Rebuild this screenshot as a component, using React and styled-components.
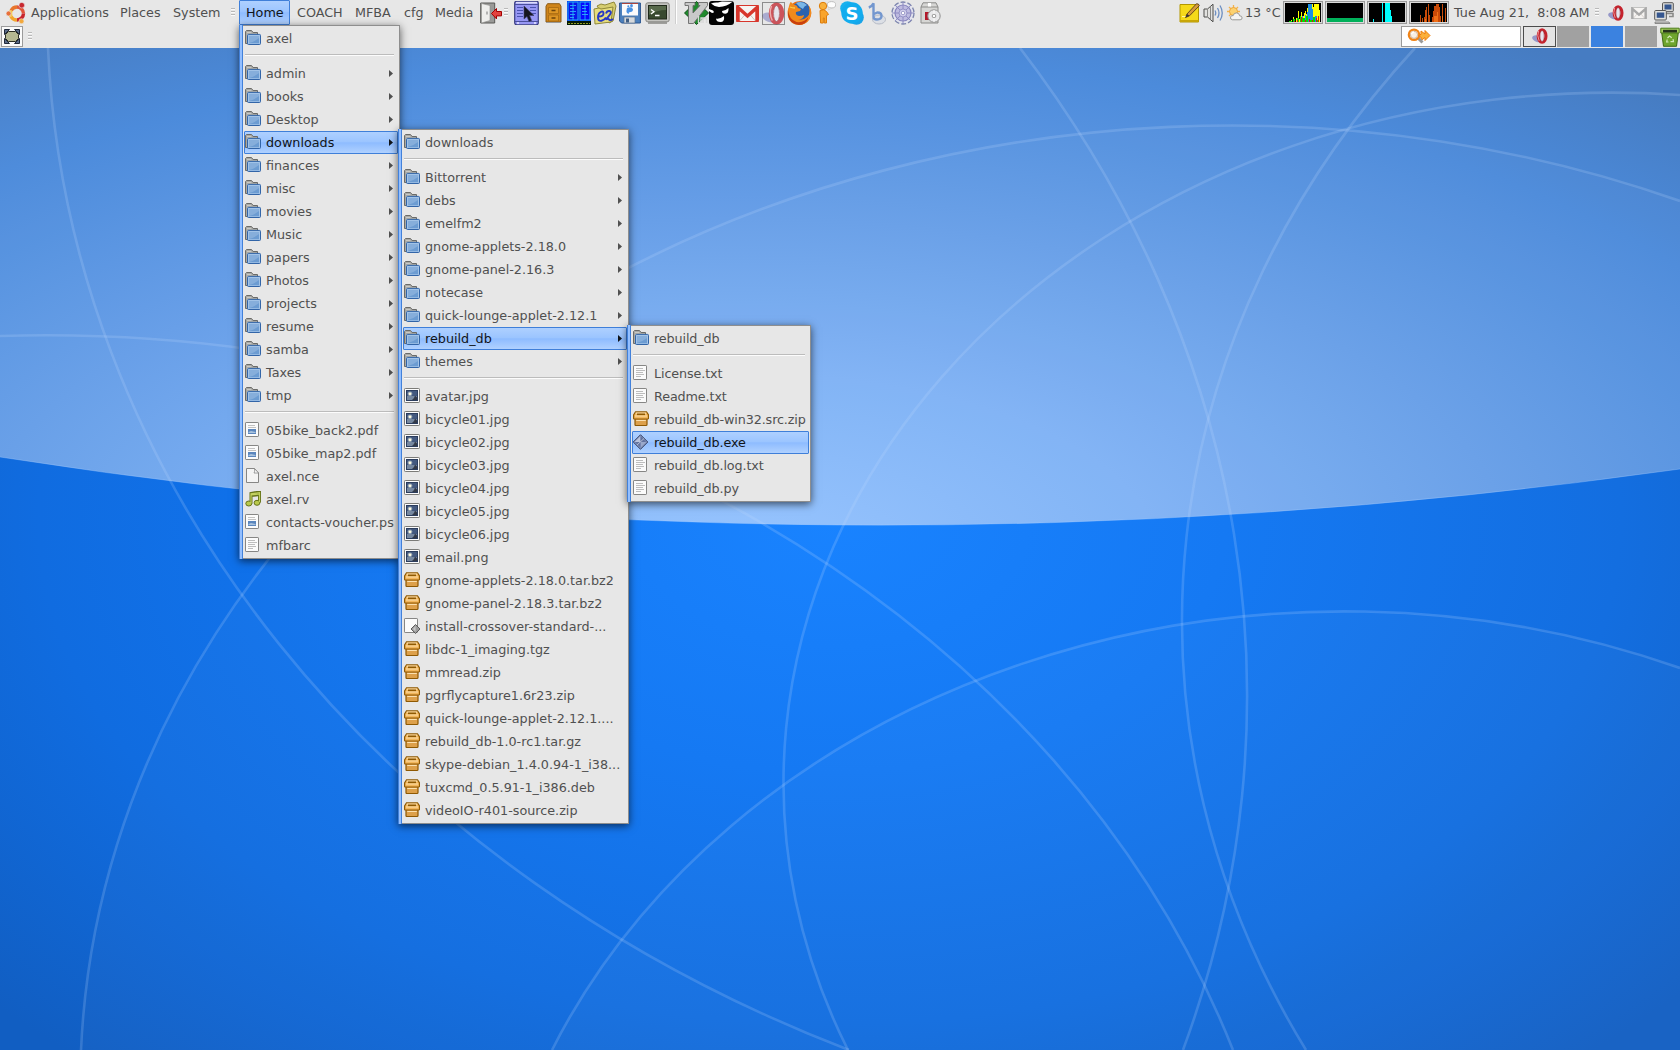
import React from "react";
import styled, { createGlobalStyle, css } from "styled-components";

const GlobalStyle = createGlobalStyle`
  * { box-sizing: border-box; }
  html, body { margin: 0; padding: 0; overflow: hidden; }
  body {
    font-family: "DejaVu Sans", sans-serif;
    font-size: 12.75px;
    color: #505050;
    cursor: default;
  }
  svg { display: block; flex: none; }
`;

/* ---------- layout ---------- */

const Desktop = styled.main`
  position: relative;
  width: 1680px;
  height: 1050px;
  overflow: hidden;
  background: #1474ee;
`;

const WallpaperSvg = styled.svg`
  position: absolute;
  inset: 0;
`;

const Panels = styled.header`
  position: relative;
  height: 48px;
  background: #e7e7e7;
`;

const Panel = styled.div`
  display: flex;
  align-items: center;
  height: 24px;
`;

const Slot = styled.div`
  display: flex;
  flex: none;
  align-items: center;
  height: 24px;
  padding-top: 2px;
  width: ${(p) => p.$w}px;
  margin-left: ${(p) => p.$gap || 0}px;
`;

const RightGroup = styled.div`
  display: flex;
  align-items: center;
  margin-left: auto;
`;

const highlight = css`
  color: #101418;
  border-color: #3f7fd9;
  background: linear-gradient(#aed0ff 0%, #9cc5ff 45%, #8ebcff 52%, #b0d1ff 100%);
`;

const MenuTitle = styled.div`
  flex: none;
  height: 25px;
  width: ${(p) => p.$w}px;
  margin-left: ${(p) => p.$gap || 0}px;
  padding-left: 6px;
  line-height: 24px;
  white-space: pre;
  border: 1px solid transparent;
  border-radius: 1px;
  align-self: flex-start;
  ${(p) => p.$active && highlight}
`;

const PanelText = styled.span`
  flex: none;
  width: ${(p) => p.$w}px;
  margin-left: ${(p) => p.$gap || 0}px;
  padding-top: 2px;
  line-height: 24px;
  white-space: pre;
`;

const Grip = styled.i`
  flex: none;
  width: 4px;
  height: 8px;
  margin-left: ${(p) => p.$gap || 0}px;
  background: repeating-linear-gradient(#b9b9b9 0 1px, #fafafa 1px 2px, transparent 2px 3px);
`;

const Divider = styled.i`
  flex: none;
  width: 2px;
  height: 24px;
  margin-left: ${(p) => p.$gap || 0}px;
  background: #cfcfcf;
  border-right: 1px solid #fff;
`;

const Monitor = styled.div`
  flex: none;
  width: 40px;
  height: 23px;
  padding: 1px;
  margin-left: 2px;
  background: #000;
  border: 1px solid #9a9a9a;
  box-shadow: inset 0 0 0 1px #dadada;
`;

const ShowDesktop = styled.div`
  display: flex;
  align-items: center;
  justify-content: center;
  width: 22px;
  height: 21px;
  margin-left: 1px;
  background: #fbfbfb;
  border: 1px solid #9b9b9b;
`;

const SearchEntry = styled.div`
  display: flex;
  align-items: center;
  width: 120px;
  height: 21px;
  padding-left: 5px;
  background: #fff;
  border: 1px solid #9b9b9b;
`;

const Workspace = styled.div`
  display: flex;
  align-items: center;
  justify-content: center;
  width: ${(p) => (p.$window ? 33 : 32)}px;
  height: 21px;
  margin-left: ${(p) => (p.$window ? 2 : p.$gap)}px;
  background: ${(p) => (p.$window ? "#e4e4e4" : p.$active ? "#3b82e0" : "#a1a1a1")};
  border: ${(p) => (p.$window ? "1px solid #4c4c4c" : "0")};
`;

/* ---------- menus ---------- */

const MenuBox = styled.nav`
  position: absolute;
  left: ${(p) => p.$x}px;
  top: ${(p) => p.$y}px;
  width: ${(p) => p.$w}px;
  display: flex;
  letter-spacing: ${(p) => p.$tracking || 0}px;
  background: #e7e7e7;
  border: 1px solid #8e8e8e;
  border-left: 0;
  box-shadow: 0 2px 8px rgba(0, 0, 0, 0.62);
`;

const MenuStripe = styled.i`
  flex: none;
  width: 4px;
  margin: -1px 0;
  background: #93bfff;
  border: solid #4281da;
  border-width: 0 1px;
`;

const MenuList = styled.div`
  flex: 1;
  min-width: 0;
  padding: 1px;
`;

const MenuRow = styled.div`
  display: flex;
  align-items: center;
  height: 23px;
  padding-right: 4px;
  border: 1px solid transparent;
  border-radius: 1px;
  white-space: nowrap;
  svg:first-child { margin-top: -2px; }
  ${(p) => p.$active && highlight}
`;

const MenuLabel = styled.span`
  flex: 1;
  min-width: 0;
  margin-left: 5px;
  line-height: 20px;
`;

const MenuRule = styled.hr`
  height: 2px;
  margin: 4px 4px 6px 1px;
  border: 0;
  background: linear-gradient(#bcbcbc 50%, #fcfcfc 50%);
`;

const Arrow = () => (
  <svg width="4" height="7" viewBox="0 0 4 7">
    <path d="M0 0 4 3.5 0 7Z" fill="currentColor" />
  </svg>
);

/* ---------- file icons ---------- */

const I = ({ s = 16, w, h, vb, children }) => (
  <svg width={w || s} height={h || s} viewBox={vb || `0 0 ${w || s} ${h || s}`}>{children}</svg>
);

const FolderIcon = () => (
  <I>
    <path d="M.5 13.5V1.5l1-1h5l1.6 2h4.4v11Z" fill="#a9a9a5" stroke="#6b6b68" />
    <path d="M2 2.5h4.400M2 4.500h10" stroke="#c9c9c5" fill="none" />
    <path d="M2.500 5.400q0-1 1-1h11q1 0 1 1v8.100q0 1-1 1h-11q-1 0-1-1Z" fill="#86aedb" stroke="#3265a8" />
    <path d="M3.500 5.500h11v8h-11z" fill="none" stroke="#a9c8ea" strokeWidth=".8" />
    <path d="M4 13q5-1 10-5v5.200H4Z" fill="#6c9cd2" />
  </I>
);

const Page = ({ children }) => (
  <>
    <rect x=".5" y=".5" width="13" height="14" rx=".6" fill="#fbfbfb" stroke="#868685" />
    {children}
  </>
);

const TextIcon = () => (
  <I>
    <Page>
      <path d="M3 3.500h7M3 5.500h9M3 7.500h7M3 9.500h8M3 11.500h5" stroke="#bdbdbd" fill="none" />
    </Page>
  </I>
);

const DocIcon = () => (
  <I>
    <Page>
      <path d="M3 3.500h7M3 5.500h8" stroke="#c2c2c2" fill="none" />
      <rect x="3" y="7" width="8" height="5" fill="#5b86bd" />
      <path d="M3.500 10 6 9l4.500 1v1h-7Z" fill="#a9c2dd" />
    </Page>
  </I>
);

const BlankIcon = () => (
  <I>
    <path d="M1.500.5h8l4 4.500v9.500h-12Z" fill="#f4f4f4" stroke="#868685" />
    <path d="M9.500.5q.8 3-.5 4.500h4.500Z" fill="#fff" stroke="#868685" strokeWidth=".8" />
  </I>
);

const MusicIcon = () => (
  <I>
    <path d="M6 12.500V2.500L14.500 1v10.500M6 4.600l8.500-1" fill="none" stroke="#65731a" strokeWidth="3" />
    <ellipse cx="3.800" cy="12.500" rx="3" ry="2.500" fill="#b9c94c" stroke="#65731a" />
    <ellipse cx="12" cy="11.800" rx="2.900" ry="2.500" fill="#b9c94c" stroke="#65731a" />
    <path d="M6 12V2.800L14.500 1.600V11M6 4l8.500-1" fill="none" stroke="#c3d160" strokeWidth="1.200" />
  </I>
);

const ImageIcon = () => (
  <I>
    <rect x=".5" y=".5" width="15" height="14" rx=".8" fill="#fcfcfc" stroke="#7b7b78" />
    <rect x="2.500" y="2.500" width="11" height="10" fill="#43597f" stroke="#2b3d5e" />
    <path d="M3 8h10v4H3Z" fill="#7688a0" />
    <circle cx="6" cy="5.800" r="2.400" fill="#8d9cae" />
    <circle cx="6" cy="5.800" r="1.400" fill="#fffce0" />
    <path d="M8 12q1-1 2-2l1-2.500 2 2V12Z" fill="#333a48" />
  </I>
);

const ArchiveIcon = () => (
  <I>
    <path d="M2 7.500h12v6q0 1-1 1H3q-1 0-1-1Z" fill="#dda04a" stroke="#8f5902" strokeWidth="1.200" />
    <path d="M2.500.9h11l2 3v3.300q0 .8-.8.8H1.400q-.8 0-.8-.8V3.900Z" fill="#f3b75c" stroke="#8f5902" strokeWidth="1.200" />
    <path d="M2.700 2.200h10.600M2 5h12M3.200 9.500h9.600" stroke="#fbe0ae" strokeWidth="1.200" />
    <path d="M4 3.300h8" stroke="#8f5902" strokeWidth="1.600" />
  </I>
);

const ScriptIcon = () => (
  <I>
    <Page />
    <path d="M11.500 6.500 16 11l-4.500 4.500L7 11Z" fill="#9c9c9c" stroke="#515151" strokeWidth=".9" />
    <path d="M11.500 8v5.500L9 11Z" fill="#c9c9c9" />
  </I>
);

const ExeIcon = () => (
  <I>
    <path d="M7.500.7 14.800 8l-7.300 7.300L.2 8Z" fill="#7d8fba" stroke="#3d4769" />
    <path d="M7.500 2v6H1.600Z" fill="#b8c3dd" />
    <path d="M7.500 8h5.800L7.500 13.800Z" fill="#9aa8ca" />
    <path d="M7.500 2 13 8H7.500ZM2 8h5.500v5.500Z" fill="#62729f" />
    <path d="M4 11 11 4.500" stroke="#c6cee2" strokeWidth=".8" />
  </I>
);

const icons = {
  dir: FolderIcon, text: TextIcon, doc: DocIcon, blank: BlankIcon, music: MusicIcon,
  image: ImageIcon, zip: ArchiveIcon, script: ScriptIcon, exe: ExeIcon,
};

/* ---------- panel icons ---------- */

const UbuntuIcon = () => (
  <I w={20} h={22}>
    <g fill="none" strokeWidth="3.400">
      <path d="M5.200 8.500A6.600 6.600 0 0 1 11 5" stroke="#e8762c" />
      <path d="M11 5A6.600 6.600 0 0 1 17.500 11.500" stroke="#e2553a" />
      <path d="M17.500 11.500A6.600 6.600 0 0 1 11 18" stroke="#c9252d" />
      <path d="M11 18A6.600 6.600 0 0 1 5 14.500" stroke="#f2a62e" />
      <path d="M5 14.500A6.600 6.600 0 0 1 5.200 8.500" stroke="#f6c544" />
    </g>
    <circle cx="2.600" cy="11.500" r="2.500" fill="#e8703a" stroke="#e7e7e7" strokeWidth=".6" />
    <circle cx="15.800" cy="3.200" r="2.800" fill="#c7272f" stroke="#e7e7e7" strokeWidth=".6" />
    <circle cx="15.500" cy="19.200" r="2.500" fill="#f3a83b" stroke="#e7e7e7" strokeWidth=".6" />
  </I>
);

const ExitIcon = () => (
  <I w={22} h={22}>
    <path d="M.7 1h14v20H.7Z" fill="#9a9a98" stroke="#595957" />
    <path d="M1.500 1.500 10 3.500v15L1.500 21Z" fill="#eeeeec" stroke="#8b8b89" strokeWidth=".6" />
    <path d="M7 9.500v3" stroke="#777" />
    <path d="M11.500 11.500 16.500 6.500v3h5v4.400h-5v3Z" fill="#e3433f" stroke="#a40000" />
  </I>
);

const BlueWindowIcon = () => (
  <I w={25} h={24} vb="0 0 25 24">
    <rect x=".7" y=".2" width="23.600" height="23.600" rx="2" fill="#9696f4" stroke="#383c80" strokeWidth="1.200" />
    <path d="M1 3.500h23M1 20.500h23" stroke="#4a4f9c" />
    <rect x="2" y="1" width="21" height="1.500" fill="#dcdcfa" />
    <path d="M3 6.500h6M3 9.500h6M3 12.500h6M3 15.500h6M16 6.500h6M16 9.500h6M16 12.500h6" stroke="#4a53b0" />
    <path d="M10 5v13l3-2.500 2 5 2.600-1-2-5h4.400Z" fill="#15151f" stroke="#3c3c66" strokeWidth=".6" />
    <circle cx="4" cy="22" r="1" fill="#e8e8ff" /><circle cx="21" cy="22" r="1" fill="#e8e8ff" />
  </I>
);

const CabinetIcon = () => (
  <I w={17} h={20}>
    <path d="M2.500.7h12l1.500 2.500V19H1V3.200Z" fill="#cf8419" stroke="#8d5a12" />
    <path d="M3.500 4.500h10v6h-10zM3.500 12h10v6h-10z" fill="#dd9524" stroke="#a76a12" strokeWidth=".8" />
    <path d="M6.500 7.500h4M6.500 15h4" stroke="#6d430a" strokeWidth="1.400" />
    <path d="M1 19.500h15" stroke="#999" />
  </I>
);

const ScreenIcon = () => (
  <I w={24} h={24}>
    <rect width="24" height="24" fill="#0c1cf0" />
    <rect x="1" y="1" width="10" height="18" fill="#0a14e8" stroke="#1eb4f0" />
    <rect x="13" y="1" width="10" height="18" fill="#0808ff" stroke="#1eb4f0" />
    <path d="M3 4.500h6M3 7.500h4M3 10.500h6M3 13.500h5M3 16.500h4M15 4.500h6M15 7.500h4M15 10.500h5M15 13.500h6" stroke="#2b9cf8" />
    <path d="M6 1v18M18 1v18" stroke="#20c0ff" strokeWidth=".8" />
    <rect y="20" width="24" height="4" fill="#041804" />
    <path d="M1 22.500h22" stroke="#8f9b22" strokeDasharray="2 1" />
  </I>
);

const E2Icon = () => (
  <I w={25} h={24}>
    <path d="M4 5 8 3l4 1 9-3 2 4-3 15-4 2Z" fill="#d6cd70" stroke="#8f8838" />
    <path d="M1 8l5-1 2 1 12-2-2 15-16 2Z" fill="#e6dd7c" stroke="#8f8838" />
    <path d="M5.500 15.500q5 0 5-3t-2.800-1.500T5 16.500t3.500 3.200q3-.5 4.500-3.200M13 12.500q1-3 3.500-2.500t.5 3.500-4.500 5q2-1.500 3.500 0t4-.5" fill="none" stroke="#2637c4" strokeWidth="1.900" />
  </I>
);

const FloppyIcon = () => (
  <I w={22} h={22}>
    <path d="M.6 1h20.800v20H2.500L.6 19Z" fill="#4c80bd" stroke="#28528d" />
    <rect x="3" y="1" width="16" height="12.500" fill="#fbfbfb" />
    <path d="M3 1.500h16" stroke="#a9443e" />
    <path d="M8 6q4-2 6 1 0 3-2.500 3t-1.500 2q-3-1-2.500-3.500Z" fill="#4a91e2" />
    <ellipse cx="12.500" cy="3.700" rx="1.400" ry="1.700" fill="#4a91e2" /><circle cx="9.300" cy="4.300" r="1" fill="#4a91e2" />
    <rect x="5" y="15" width="11" height="6" fill="#d6d9dc" stroke="#59738f" strokeWidth=".7" />
    <rect x="7" y="16.500" width="3" height="4" fill="#3f5f85" />
  </I>
);

const TerminalIcon = () => (
  <I w={25} h={22}>
    <rect x=".8" y=".8" width="23.400" height="19" rx="2" fill="#c4c4c0" stroke="#858581" />
    <rect x="3.500" y="3.500" width="18" height="13.500" fill="#38492f" stroke="#20291a" />
    <path d="M4 4h17v4Q12 8 4 13Z" fill="#57694b" />
    <path d="M6 7.500l3 2.300-3 2.300M10 13.500h4.500" fill="none" stroke="#fff" strokeWidth="1.300" />
    <path d="M3 21h19" stroke="#8d8d8a" strokeWidth="1.600" />
  </I>
);

const VimIcon = () => (
  <I w={25} h={24}>
    <path d="M12.500.5 24.500 12 12.500 23.500.5 12Z" fill="#1f8a2c" stroke="#0d4d16" />
    <path d="M1 1.500h10v3H9v7.500L16 4.500h-1.500v-3h9v3L9.500 22.500h-5V4.500H1Z" fill="#c9c9c9" stroke="#6a6a6a" strokeWidth=".9" />
    <path d="M14.500 15v7M17 22v-5l2 0v5M19 17h3.500v5" fill="none" stroke="#d8d8d8" strokeWidth="1.400" />
  </I>
);

const PirateIcon = () => (
  <I w={25} h={24}>
    <rect width="25" height="24" rx="3" fill="#040404" />
    <path d="M2 2.500Q6 1 9 1.500L13 .5 23.500 .8Q18 5.500 10 6 5 5.500 2 2.500Z" fill="#fff" />
    <path d="M13 10q4-.5 6.500-3 .5 5.500-3.200 5.800Q13 12.800 13 10Z" fill="#fff" />
    <path d="M7 17.500q3.500 1 8-2.500.8 6-3.500 6t-4.500-3.500Z" fill="#fff" />
    <path d="M0 8l4 1.500Q6 12 3 12L0 10Z" fill="#fff" />
  </I>
);

const MailIcon = ({ w, h, color }) => (
  <I w={w} h={h} vb="0 0 23 17">
    <rect x=".5" y=".5" width="22" height="16" rx="1" fill="#f6f4f2" stroke={color} />
    <path d="M3.500 16 9.500 9M19.500 16 13.500 9" stroke="#c9c4c0" />
    <path d="M2 17V2.500L11.500 11 21 2.500V17" fill="none" stroke={color} strokeWidth="3.400" />
  </I>
);

const OperaIcon = ({ w = 23, h = 23, dotted, fade }) => (
  <I w={w} h={h} vb="0 0 23 23">
    <g opacity={fade ? 0.75 : 1}>
      <ellipse cx="7.500" cy="15.500" rx="7.500" ry="4.500" transform="rotate(20 7.500 15.500)" fill="#9698c8" />
      <ellipse cx="14.500" cy="11.500" rx="5.600" ry="8.800" fill="#f2eeee" stroke="#c4222c" strokeWidth="4.400" />
      <ellipse cx="14.500" cy="11.500" rx="3" ry="8" fill="#e6e4ee" stroke="#8e1822" strokeWidth=".7" />
      <path d="M9.500 4q-2.800 7 .8 14.500" fill="none" stroke="#f0989b" strokeWidth="1.400" />
    </g>
    {dotted && <rect x=".5" y=".5" width="22" height="22" fill="none" stroke="#333" strokeDasharray="1 1" />}
  </I>
);

const FirefoxIcon = () => (
  <I w={25} h={24}>
    <circle cx="12.500" cy="12" r="11.700" fill="#e66c12" />
    <circle cx="14" cy="9.500" r="9" fill="#2b62ae" />
    <path d="M9 2q6-3 11 2-3 1-4 4-4-2-7-6Z" fill="#7ab6e6" />
    <path d="M2 5q1-4 2-4 1 2 4 3 2 0 3 3l3 1-1 2-4 1q-1 3 3 4 3 0 5-1 0 4-6 5 7 1 11-5 1-4 0-9 3 4 2 9-2 9-11 10Q3 24 .8 15 .2 9 2 5Z" fill="#f28a1c" />
    <path d="M1.500 9q0 9 8 12 8 1 12-5-2 8-9.500 8Q2 23 1 14Z" fill="#c9400e" />
    <path d="M3 6q2 1 5 1" stroke="#fbd04a" strokeWidth="1.300" fill="none" />
  </I>
);

const ChatIcon = () => (
  <I w={18} h={24}>
    <circle cx="5" cy="5" r="3.700" fill="#f9b13b" stroke="#dd7d0b" />
    <path d="M2 9.500q4-2 6.500 1l2 3-2 1v7.500H6.300v-5H5.300v5H2.600Z" fill="#f9a42b" stroke="#dd7d0b" />
    <ellipse cx="13.500" cy="3.800" rx="4.200" ry="3.200" fill="#fdfdfd" stroke="#bdbdbd" />
    <path d="M11.500 6.500 10.500 9l3-2Z" fill="#fdfdfd" stroke="#bdbdbd" strokeWidth=".5" />
  </I>
);

const Letter = styled.text`
  font: bold ${(p) => p.$s}px "DejaVu Sans", sans-serif;
  text-anchor: middle;
`;

const SkypeIcon = () => (
  <I w={24} h={24}>
    <circle cx="7.500" cy="7.500" r="7.300" fill="#18b1ee" /><circle cx="16.500" cy="16.500" r="7.300" fill="#18a4e8" />
    <circle cx="12" cy="12" r="10.700" fill="#12acee" />
    <Letter x="12" y="18.500" $s={18} fill="#fff">S</Letter>
  </I>
);

const BIcon = () => (
  <I w={18} h={23}>
    <ellipse cx="11" cy="17.500" rx="6.500" ry="4.500" fill="#dcdfe5" stroke="#b5bac5" />
    <path d="M.8 5.500Q4 4.500 5.500 1.200V15q0 2.500 3.500 2.500 4.500 0 4.500-3.500T9.500 10.500L6 12" fill="none" stroke="#7397cf" strokeWidth="2.400" />
  </I>
);

const WheelIcon = () => (
  <I w={24} h={24}>
    <circle cx="12" cy="12" r="11" fill="#e3e4ee" stroke="#7d86ad" strokeWidth="1.300" strokeDasharray="5 2" />
    <circle cx="12" cy="12" r="8" fill="#bebbe0" stroke="#8886be" strokeWidth="1.200" />
    <path d="M12 1v7M12 16v7M1 12h7M16 12h7M4.200 4.200l5 5M14.800 14.800l5 5M19.800 4.200l-5 5M9.200 14.800l-5 5" stroke="#8a88c0" strokeWidth=".9" />
    <circle cx="12" cy="12" r="4" fill="#cfcdea" stroke="#8a88c0" strokeWidth=".8" />
    <circle cx="12" cy="12" r="1.700" fill="#fff" stroke="#7775b0" strokeWidth=".6" />
  </I>
);

const PackageIcon = () => (
  <I w={21} h={22}>
    <path d="M1 5 3 .8h13L18 5v16H1Z" fill="#d6d6d4" stroke="#8b8b89" />
    <path d="M1 5h17" stroke="#8b8b89" /><path d="M8 1h3v3.500H8z" fill="#fff" />
    <rect x="5" y="10" width="7" height="8" fill="#b3182a" />
    <circle cx="14" cy="14" r="6.200" fill="#e8e8ea" stroke="#929292" />
    <circle cx="14" cy="14" r="1.800" fill="#fff" stroke="#999" />
    <path d="M14 8v4M14 16v4" stroke="#fff" />
  </I>
);

const NoteIcon = () => (
  <I w={21} h={20}>
    <path d="M1 1.500h18.500V19H1Z" fill="#f5d91a" stroke="#b39700" />
    <path d="M1 17h18.500v2H1Z" fill="#c8a608" />
    <path d="M6.500 14.500 8 11 17.500.7q2.500 0 2.800 2L10.500 12.800Z" fill="#d79a3c" stroke="#553c17" strokeWidth=".9" />
    <path d="M6.500 14.500 8 11l2.500 1.800Z" fill="#333" />
    <path d="M3 13.500h3.500" stroke="#fff7a8" />
  </I>
);

const SpeakerIcon = () => (
  <I w={21} h={20}>
    <path d="M1 6h3.500L10 1.200V18.800L4.500 14H1Z" fill="#e2e2e0" stroke="#4c4c4a" />
    <path d="M4.500 6v8M7.500 3.500v13" stroke="#8b8b88" />
    <path d="M12 7.500q1.500 2.500 0 5M14.500 5q3 5 0 10M17 2.500q4.500 7.500 0 15" fill="none" stroke="#6d8fc2" strokeWidth="1.300" />
  </I>
);

const WeatherIcon = () => (
  <I>
    <path d="M6.500 0v13M0 6.500h13M2 2l9 9M11 2l-9 9" stroke="#f3b24c" strokeWidth="1.300" />
    <circle cx="6.500" cy="6.500" r="4" fill="#fcd271" stroke="#eda53a" />
    <path d="M5.500 14.800q-2.500-.3-2-2.700.6-1.900 2.700-1.500.6-2.900 3.500-2.700 2.700.2 2.900 2.900 2.500 0 2.500 2.100 0 1.900-2 1.900Z" fill="#f5f5f5" stroke="#9a9a98" />
  </I>
);

const NetworkIcon = () => (
  <I w={20} h={22}>
    <rect x="8.500" y=".7" width="10.800" height="9" rx="1" fill="#d8d8d5" stroke="#555" />
    <rect x="10.500" y="2.500" width="7" height="5" fill="#35568f" />
    <path d="M9 11.500h10v3h-4" fill="none" stroke="#8a8a88" strokeWidth="1.600" />
    <rect x=".7" y="8.500" width="11.600" height="9.500" rx="1" fill="#e2e2df" stroke="#555" />
    <rect x="2.700" y="10.500" width="7.600" height="5.300" fill="#35568f" />
    <path d="M1 20h14l1 1.500H1Z" fill="#ccc" stroke="#777" strokeWidth=".8" />
  </I>
);

const FullscreenIcon = () => (
  <I w={16} h={15}>
    <path d="M.5.500h5l-5 5ZM15.500.5h-5l5 5ZM.5 14.500h5l-5-5ZM15.500 14.500h-5l5-5Z" fill="#5b6b86" stroke="#20293a" />
    <path d="M4.500 2.500h7l3 3v4l-3 3h-7l-3-3v-4Z" fill="#b5b892" stroke="#2c2e22" />
  </I>
);

const SearchIcon = () => (
  <I w={24} h={17}>
    <path d="M12 6.500h2V3l4 3V2.500l5 5-5 5V9.500l-4 3V9h-2Z" fill="#fbb03b" stroke="#ee7d0c" />
    <path d="M11 10l4.500 4.500" stroke="#999" strokeWidth="3" />
    <circle cx="7" cy="6.800" r="5.200" fill="#f7eee4" stroke="#f08316" strokeWidth="2.200" />
    <circle cx="7" cy="6.800" r="3.600" fill="none" stroke="#c9a684" strokeWidth=".8" />
    <path d="M4.500 6q.5-2 2.500-2" fill="none" stroke="#fff" strokeWidth="1.300" />
  </I>
);

const TrashIcon = () => (
  <I w={20} h={20}>
    <path d="M1.500 4h17l-2 15.300H3.500Z" fill="#6fa52e" stroke="#3f6a14" />
    <path d="M.8 1.200h18.400V6H.8Z" fill="#a5d05d" stroke="#4b7a19" />
    <path d="M3 2.800h14v2.700H3Z" fill="#26331b" />
    <path d="m7.500 11 2-2 2.200 1.700M13 12.200l.5 2.500h-3M8.500 15H6.700l.5-2.500" fill="none" stroke="#d4eab8" strokeWidth="1.200" />
  </I>
);

/* ---------- system monitors ---------- */

const Bars = ({ data, color }) =>
  data.map(([x, h, w = 1, base = 0], i) => (
    <rect key={i} x={x} y={19 - h - base} width={w} height={h} fill={color} />
  ));

const Graph = ({ children }) => (
  <Monitor>
    <svg width="36" height="19" viewBox="0 0 36 19" shapeRendering="crispEdges">
      <rect width="36" height="19" fill="#000" />
      {children}
    </svg>
  </Monitor>
);

const CpuGraph = () => (
  <Graph>
    <Bars color="#ffff00" data={[[6, 2], [8, 5], [11, 4], [13, 11], [14, 3], [15, 5], [16, 10], [18, 6], [19, 9], [20, 11], [21, 8], [22, 14], [23, 17], [24, 18], [27, 18], [28, 15], [29, 18, 5], [34, 12]]} />
    <Bars color="#1c8fe0" data={[[17, 6], [20, 7], [22, 10], [23, 18, 4], [27, 13], [30, 6, 2], [33, 3]]} />
    <Bars color="#00e000" data={[[4, 1, 3], [8, 3, 2], [12, 4, 2], [15, 6], [17, 4, 3], [21, 6, 2], [24, 2, 3], [28, 5, 2], [32, 2]]} />
    <Bars color="#e01010" data={[[9, 1], [12, 2], [16, 5], [20, 2], [24, 3], [27, 2], [31, 4], [33, 6]]} />
  </Graph>
);

const MemGraph = () => (
  <Graph><rect y="15" width="36" height="4" fill="#00b05a" /></Graph>
);

const NetGraph = () => (
  <Graph>
    <Bars color="#00ffff" data={[[4, 3], [13, 19], [16, 19, 5], [21, 12], [22, 6]]} />
  </Graph>
);

const LoadGraph = () => (
  <Graph>
    <Bars color="#c94a08" data={[[9, 7], [11, 4], [13, 5], [14, 12], [15, 15], [17, 18], [18, 7], [21, 5], [22, 11], [23, 16, 2], [25, 18, 3], [28, 15], [29, 6], [31, 18], [34, 14]]} />
    <Bars color="#f07018" data={[[14, 3], [23, 6, 3], [26, 10], [31, 6]]} />
  </Graph>
);

/* ---------- wallpaper ---------- */

const STRETCH = 1.2;

/* Elliptical arc (width:height = STRETCH) that runs through three points. */
const arc = (a, m, b) => {
  const [x1, y1, x2, y2, x3, y3] = [a[0], a[1] * STRETCH, m[0], m[1] * STRETCH, b[0], b[1] * STRETCH];
  const cross = (x2 - x1) * (y3 - y2) - (y2 - y1) * (x3 - x2);
  const r =
    (Math.hypot(x2 - x1, y2 - y1) * Math.hypot(x3 - x2, y3 - y2) * Math.hypot(x3 - x1, y3 - y1)) /
    (2 * Math.abs(cross));
  return `M${a}A${r} ${r / STRETCH} 0 0 ${cross > 0 ? 1 : 0} ${b}`;
};

const curves = [
  arc([48, 48], [242, 595], [849, 1050]),
  arc([81, 1050], [630, 267], [1680, 201]),
  arc([552, 1050], [975, 681], [1680, 668]),
  arc([1415, 48], [1182, 624], [1306, 1050]),
  arc([1020, 48], [1244, 617], [1183, 1050]),
  arc([1680, 95], [844, 524], [848, 1050]),
  arc([0, 336], [826, 563], [1233, 1050]),
];

const Wallpaper = () => (
  <WallpaperSvg width="1680" height="1050" viewBox="0 0 1680 1050">
    <defs>
      <radialGradient id="low" gradientUnits="userSpaceOnUse" cx="0" cy="0" r="1" gradientTransform="translate(830 520) scale(1130 720)">
        <stop offset="0" stopColor="#1480ff" />
        <stop offset=".35" stopColor="#1076f3" />
        <stop offset=".7" stopColor="#0e6be0" />
        <stop offset="1" stopColor="#0f5dc2" />
      </radialGradient>
      <radialGradient id="high" gradientUnits="userSpaceOnUse" cx="0" cy="0" r="1" gradientTransform="translate(740 560) scale(1400 620)">
        <stop offset="0" stopColor="#96c4ff" />
        <stop offset=".3" stopColor="#80b3f5" />
        <stop offset=".55" stopColor="#689fe8" />
        <stop offset=".82" stopColor="#4c8bdb" />
        <stop offset="1" stopColor="#467cc2" />
      </radialGradient>
    </defs>
    <rect width="1680" height="1050" fill="url(#low)" />
    <path d="M0 0H1680V469A5714 5714 0 0 1 0 457Z" fill="url(#high)" />
    <path d={curves[0] + "H0V48Z"} fill="#fff" opacity=".012" />
    <path d={curves[1] + "V1050Z"} fill="#fff" opacity=".025" />
    <path d={curves[2] + "V1050Z"} fill="#fff" opacity=".025" />
    <path d="M0 457A5714 5714 0 0 0 1680 469" fill="none" stroke="#a9ceff" strokeOpacity=".35" />
    {curves.map((d, i) => (
      <path key={i} d={d} fill="none" stroke="#c4dcff" strokeOpacity=".2" strokeWidth="2.600" />
    ))}
  </WallpaperSvg>
);

/* ---------- menu data ---------- */

const dir = (t, active) => ({ t, icon: "dir", sub: true, active });
const file = (icon, ...names) => names.map((t) => ({ t, icon }));
const rule = { rule: true };

const homeMenu = [
  { t: "axel", icon: "dir" }, rule,
  dir("admin"), dir("books"), dir("Desktop"), dir("downloads", true),
  ...["finances", "misc", "movies", "Music", "papers", "Photos", "projects", "resume", "samba", "Taxes", "tmp"].map((t) => dir(t)),
  rule,
  ...file("doc", "05bike_back2.pdf", "05bike_map2.pdf"),
  ...file("blank", "axel.nce"), ...file("music", "axel.rv"),
  ...file("doc", "contacts-voucher.ps"), ...file("text", "mfbarc"),
];

const downloadsMenu = [
  { t: "downloads", icon: "dir" }, rule,
  ...["Bittorrent", "debs", "emelfm2", "gnome-applets-2.18.0", "gnome-panel-2.16.3", "notecase", "quick-lounge-applet-2.12.1"].map((t) => dir(t)),
  dir("rebuild_db", true), dir("themes"), rule,
  ...file("image", "avatar.jpg", "bicycle01.jpg", "bicycle02.jpg", "bicycle03.jpg", "bicycle04.jpg", "bicycle05.jpg", "bicycle06.jpg", "email.png"),
  ...file("zip", "gnome-applets-2.18.0.tar.bz2", "gnome-panel-2.18.3.tar.bz2"),
  ...file("script", "install-crossover-standard-..."),
  ...file("zip", "libdc-1_imaging.tgz", "mmread.zip", "pgrflycapture1.6r23.zip", "quick-lounge-applet-2.12.1....",
    "rebuild_db-1.0-rc1.tar.gz", "skype-debian_1.4.0.94-1_i38...", "tuxcmd_0.5.91-1_i386.deb", "videoIO-r401-source.zip"),
];

const rebuildMenu = [
  { t: "rebuild_db", icon: "dir" }, rule,
  ...file("text", "License.txt", "Readme.txt"),
  ...file("zip", "rebuild_db-win32.src.zip"),
  { t: "rebuild_db.exe", icon: "exe", active: true },
  ...file("text", "rebuild_db.log.txt", "rebuild_db.py"),
];

const Menu = ({ x, y, w, tracking, items }) => (
  <MenuBox $x={x} $y={y} $w={w} $tracking={tracking}>
    <MenuStripe />
    <MenuList>
      {items.map((it, i) => {
        if (it.rule) return <MenuRule key={i} />;
        const Icon = icons[it.icon];
        return (
          <MenuRow key={i} $active={it.active}>
            <Icon />
            <MenuLabel>{it.t}</MenuLabel>
            {it.sub && <Arrow />}
          </MenuRow>
        );
      })}
    </MenuList>
  </MenuBox>
);

/* ---------- page ---------- */

const launchers = [
  [BlueWindowIcon, 25, 6], [CabinetIcon, 17, 6], [ScreenIcon, 24, 5], [E2Icon, 25, 2],
  [FloppyIcon, 22, 1], [TerminalIcon, 25, 4],
];

const apps = [
  [VimIcon, 25, 7], [PirateIcon, 25, 0], [() => <MailIcon w={23} h={17} color="#d8362c" />, 23, 2],
  [() => <OperaIcon dotted fade />, 23, 3], [FirefoxIcon, 25, 2], [ChatIcon, 18, 6], [SkypeIcon, 24, 4],
  [BIcon, 18, 4], [WheelIcon, 24, 5], [PackageIcon, 21, 5],
];

const Icons = ({ list }) => list.map(([C, w, gap], i) => <Slot key={i} $w={w} $gap={gap}><C /></Slot>);

export default function App() {
  return (
    <Desktop>
      <GlobalStyle />
      <Wallpaper />
      <Panels>
        <Panel>
          <Slot $w={20} $gap={6}><UbuntuIcon /></Slot>
          <PanelText $w={89} $gap={5}>Applications</PanelText>
          <PanelText $w={53}>Places</PanelText>
          <PanelText $w={58}>System</PanelText>
          <Grip />
          <MenuTitle $w={51} $gap={4} $active>Home</MenuTitle>
          <MenuTitle $w={58}>COACH</MenuTitle>
          <MenuTitle $w={49}>MFBA</MenuTitle>
          <MenuTitle $w={31}>cfg</MenuTitle>
          <MenuTitle $w={52}>Media</MenuTitle>
          <Slot $w={22}><ExitIcon /></Slot>
          <Grip $gap={2} />
          <Icons list={launchers} />
          <Divider $gap={5} />
          <Icons list={apps} />
          <RightGroup>
            <Slot $w={21}><NoteIcon /></Slot>
            <Slot $w={21} $gap={3}><SpeakerIcon /></Slot>
            <Slot $w={16} $gap={3}><WeatherIcon /></Slot>
            <PanelText $w={36} $gap={2}>13 °C</PanelText>
            <CpuGraph /><MemGraph /><NetGraph /><LoadGraph />
            <PanelText $w={141} $gap={5}>Tue Aug 21,  8:08 AM</PanelText>
            <Grip />
            <Slot $w={16} $gap={9}><OperaIcon w={16} h={16} /></Slot>
            <Slot $w={16} $gap={7}><MailIcon w={16} h={12} color="#a8a8a8" /></Slot>
            <Slot $w={26} $gap={7}><NetworkIcon /></Slot>
          </RightGroup>
        </Panel>
        <Panel>
          <ShowDesktop><FullscreenIcon /></ShowDesktop>
          <Grip $gap={5} />
          <RightGroup>
            <SearchEntry><SearchIcon /></SearchEntry>
            <Workspace $window><OperaIcon w={16} h={16} /></Workspace>
            <Workspace $gap={1} />
            <Workspace $gap={2} $active />
            <Workspace $gap={2} />
            <Slot $w={20} $gap={3}><TrashIcon /></Slot>
          </RightGroup>
        </Panel>
      </Panels>
      <Menu x={239} y={25} w={161} items={homeMenu} />
      <Menu x={398} y={129} w={231} items={downloadsMenu} />
      <Menu x={627} y={325} w={184} tracking={-0.12} items={rebuildMenu} />
    </Desktop>
  );
}
